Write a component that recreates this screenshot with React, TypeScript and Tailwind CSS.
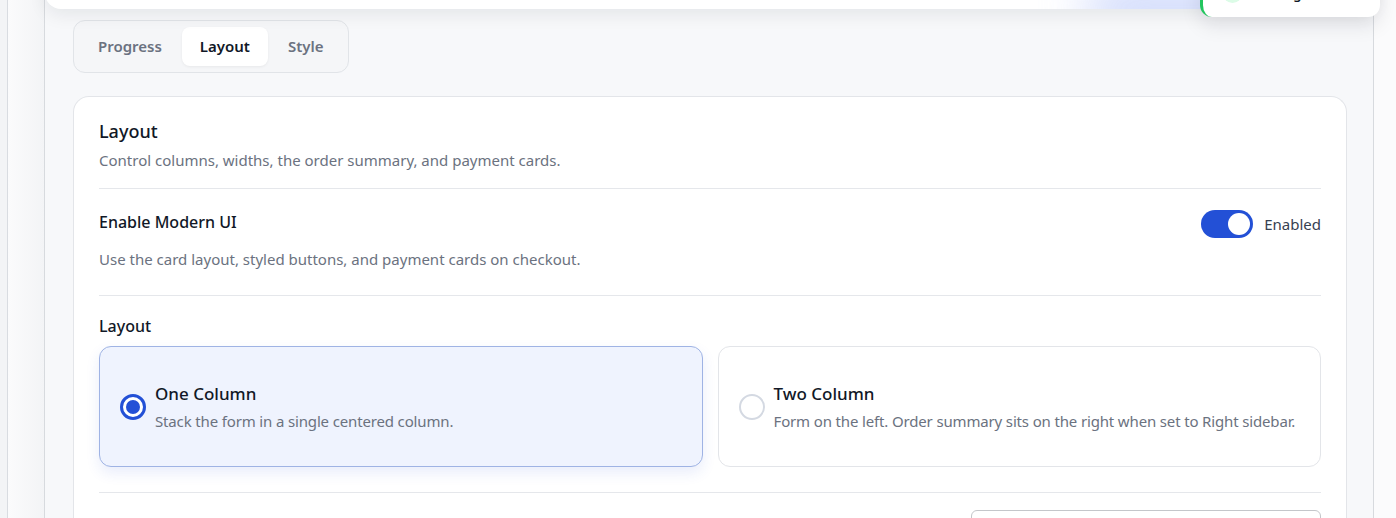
import { useState } from "react";

const font = { fontFamily: '"Noto Sans", "Open Sans", sans-serif' };

const tabs = ["Progress", "Layout", "Style"];

const RadioCard = ({
  title,
  desc,
  checked,
  onClick,
}: {
  title: string;
  desc: string;
  checked: boolean;
  onClick: () => void;
}) => (
  <button
    onClick={onClick}
    className={`flex h-[121px] flex-1 items-center gap-[9px] rounded-xl border px-5 text-left ${
      checked
        ? "border-[#9fb3e4] bg-[#eff3fe] shadow-[0_6px_14px_rgba(37,80,214,0.10)]"
        : "border-[#e3e5e9] bg-white"
    }`}
  >
    {checked ? (
      <span className="flex h-[26px] w-[26px] shrink-0 rounded-full border-[3px] border-[#2350d6] bg-white p-[3px]">
        <span className="h-full w-full rounded-full bg-[#2350d6]" />
      </span>
    ) : (
      <span className="h-[26px] w-[26px] shrink-0 rounded-full border-2 border-[#d4d9e2] bg-white" />
    )}
    <span className="flex flex-col gap-[5px]">
      <span className="text-[17px] leading-6 font-medium text-[#111827]">{title}</span>
      <span className="whitespace-nowrap text-[15px] leading-5 tracking-[-0.15px] text-[#6b7280]">{desc}</span>
    </span>
  </button>
);

export default function App() {
  const [tab, setTab] = useState("Layout");
  const [modern, setModern] = useState(true);
  const [cols, setCols] = useState("one");

  return (
    <div style={font} className="relative flex h-[518px] w-full overflow-hidden bg-[#fbfbfc]">
      <div className="w-[8px] shrink-0 border-r border-[#d9dce1] bg-[#f3f4f6]" />
      <div className="w-[36px] shrink-0 bg-gradient-to-r from-[#fbfbfc] to-[#f3f4f6]" />

      <div className="flex w-[1330px] shrink-0 flex-col border-x border-[#d7dade] bg-[#f7f8fa] pl-[28px] pr-[26px]">
        <div className="relative -mx-[28px] -mt-[51px] h-[60px] shrink-0 overflow-hidden rounded-b-2xl bg-white shadow-[0_6px_18px_rgba(15,23,42,0.08)]">
          <div className="absolute bottom-[-22px] left-[1040px] h-[44px] w-[190px] rounded-full bg-[#b9c8fa] opacity-80 blur-xl" />
        </div>

        <div className="mt-[11px] flex w-fit gap-[2px] rounded-xl border border-[#e1e4e8] bg-[#f5f6f8] p-[6px]">
          {tabs.map((t) => (
            <button
              key={t}
              onClick={() => setTab(t)}
              className={`h-[39px] rounded-lg px-[18px] text-[15px] font-semibold ${
                tab === t ? "bg-white text-[#111827] shadow-[0_1px_3px_rgba(0,0,0,0.06)]" : "text-[#6b7280]"
              }`}
            >
              {t}
            </button>
          ))}
        </div>

        <div className="mt-[23px] flex-1 rounded-t-2xl border border-b-0 border-[#e3e5e9] bg-white px-[25px] pt-[22px]">
          <div className="text-[18px] leading-6 font-medium text-[#111827]">Layout</div>
          <div className="mt-[7px] text-[15px] leading-5 text-[#6b7280]">
            Control columns, widths, the order summary, and payment cards.
          </div>
          <div className="mt-[18px] h-px bg-[#e5e7eb]" />

          <div className="pt-[21px]">
            <div className="flex items-center justify-between">
              <div className="pb-[4px] text-[16px] leading-6 font-medium text-[#111827]">Enable Modern UI</div>
              <div className="flex items-center gap-[11px]">
                <button
                  onClick={() => setModern(!modern)}
                  className={`flex h-[28px] w-[52px] items-center rounded-full p-[3px] ${
                    modern ? "justify-end bg-[#2350d6]" : "justify-start bg-[#d1d5db]"
                  }`}
                >
                  <span className="h-[22px] w-[22px] rounded-full bg-white" />
                </button>
                <span className="text-[15px] text-[#374151]">{modern ? "Enabled" : "Disabled"}</span>
              </div>
            </div>
            <div className="mt-[11px] text-[15px] leading-5 text-[#6b7280]">
              Use the card layout, styled buttons, and payment cards on checkout.
            </div>
          </div>
          <div className="mt-[26px] h-px bg-[#e5e7eb]" />

          <div className="pt-[18px]">
            <div className="text-[16px] leading-6 font-medium text-[#111827]">Layout</div>
            <div className="mt-[8px] flex gap-[15px]">
              <RadioCard
                title="One Column"
                desc="Stack the form in a single centered column."
                checked={cols === "one"}
                onClick={() => setCols("one")}
              />
              <RadioCard
                title="Two Column"
                desc="Form on the left. Order summary sits on the right when set to Right sidebar."
                checked={cols === "two"}
                onClick={() => setCols("two")}
              />
            </div>
          </div>
          <div className="mt-[25px] h-px bg-[#e5e7eb]" />

          <div className="flex justify-end pt-[17px]">
            <div className="h-[40px] w-[350px] rounded-md border border-[#c4c6ca] bg-white" />
          </div>
        </div>
      </div>

      <div className="flex-1 bg-[#fbfbfc]" />

      <div className="absolute left-[1200px] top-[-30px] flex h-[47px] w-[180px] items-center gap-[12px] rounded-xl border-l-[3px] border-[#22c55e] bg-white pl-[20px] shadow-[0_8px_20px_rgba(15,23,42,0.10)]">
        <span className="h-[19px] w-[19px] rounded-full bg-[#dcfce7]" />
        <span className="text-[14px] font-medium text-[#111827]">Settings saved</span>
      </div>
    </div>
  );
}
